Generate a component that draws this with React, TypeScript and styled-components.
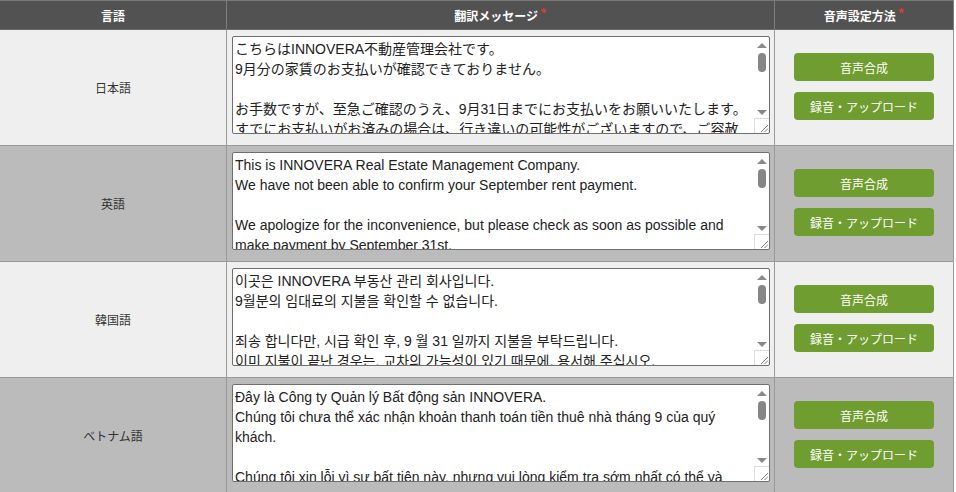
import React from "react";
import styled, { createGlobalStyle } from "styled-components";

const Global = createGlobalStyle`
  html, body { margin: 0; padding: 0; background: #ffffff; }
  body { font-family: "Liberation Sans", "Noto Sans CJK JP", sans-serif; }
`;

const Table = styled.div`
  width: 954px;
  display: grid;
  grid-template-columns: 227px 548px 179px;
`;

const HeadCell = styled.div`
  height: 28px;
  background: #525252;
  border-top: 1px solid #7a7a7a;
  border-bottom: 1px solid #6a6a6a;
  border-right: 1px solid #7c7c7c;
  display: flex;
  align-items: center;
  justify-content: center;
  color: #ffffff;
  font-family: "Noto Sans CJK JP", sans-serif;
  font-weight: 700;
  font-size: 12px;
`;

const Req = styled.span`
  color: #e0383b;
  font-size: 13px;
  margin-left: 2px;
  position: relative;
  top: -3px;
`;

const Cell = styled.div<{ $alt: boolean }>`
  height: 115px;
  background: ${(p) => (p.$alt ? "#bbbbbb" : "#efefef")};
  border-bottom: 1px solid #9a9a9a;
  border-right: 1px solid #9a9a9a;
  box-sizing: content-box;
`;

const LangCell = styled(Cell)`
  display: flex;
  align-items: center;
  justify-content: center;
  color: #333333;
  font-family: "Noto Sans CJK JP", sans-serif;
  font-size: 12px;
`;

const MsgCell = styled(Cell)`
  padding: 6px 0 0 5px;
  height: 109px;
`;

const ActionCell = styled(Cell)`
  display: flex;
  flex-direction: column;
  align-items: center;
  justify-content: center;
  gap: 11px;
  padding-bottom: 2px;
  height: 113px;
`;

const Field = styled.div`
  box-sizing: border-box;
  width: 538px;
  height: 98px;
  border: 1px solid #6f6f6f;
  border-radius: 2px;
  background: #ffffff;
  display: flex;
  overflow: hidden;
`;

const Message = styled.textarea`
  display: block;
  box-sizing: border-box;
  flex: 1;
  min-width: 0;
  height: 100%;
  margin: 0;
  padding: 2px 2px;
  border: none;
  background: transparent;
  color: #222222;
  font-family: "Liberation Sans", "Noto Sans CJK JP", "Noto Sans CJK KR", sans-serif;
  font-size: 14px;
  line-height: 20px;
  resize: none;
  overflow: hidden;
  outline: none;
`;

const Rail = styled.div`
  width: 15px;
  flex: none;
  display: flex;
  flex-direction: column;
  align-items: center;
`;

const Arrow = styled.div<{ $down?: boolean }>`
  width: 0;
  height: 0;
  margin-top: ${(p) => (p.$down ? "auto" : "6px")};
  margin-bottom: ${(p) => (p.$down ? "3px" : "0")};
  border-left: 5px solid transparent;
  border-right: 5px solid transparent;
  ${(p) =>
    p.$down ? "border-top: 5px solid #8a8a8a;" : "border-bottom: 5px solid #8a8a8a;"}
`;

const Thumb = styled.div`
  width: 8px;
  height: 19px;
  margin-top: 5px;
  border-radius: 4px;
  background: #868686;
`;

const Resizer = styled.div`
  box-sizing: border-box;
  width: 15px;
  height: 15px;
  border-left: 1px solid #dcdcdc;
  border-top: 1px solid #dcdcdc;
  display: flex;
  align-items: flex-end;
  justify-content: flex-end;
  padding: 0 1px 1px 0;
`;

const GreenButton = styled.button`
  width: 140px;
  height: 28px;
  border: none;
  border-radius: 4px;
  background: #6f9d2f;
  color: #ffffff;
  font-family: "Noto Sans CJK JP", sans-serif;
  font-size: 12px;
  padding: 0;
  cursor: pointer;
`;

const Grip = () => (
  <svg width="9" height="9" viewBox="0 0 9 9">
    <line x1="2" y1="9" x2="9" y2="2" stroke="#7a7a7a" strokeWidth="1" />
    <line x1="5.5" y1="9" x2="9" y2="5.5" stroke="#7a7a7a" strokeWidth="1" />
  </svg>
);

const rows = [
  {
    lang: "日本語",
    text:
      "こちらはINNOVERA不動産管理会社です。\n9月分の家賃のお支払いが確認できておりません。\n\nお手数ですが、至急ご確認のうえ、9月31日までにお支払いをお願いいたします。\nすでにお支払いがお済みの場合は、行き違いの可能性がございますので、ご容赦ください。\n\nINNOVERA不動産管理会社",
  },
  {
    lang: "英語",
    text:
      "This is INNOVERA Real Estate Management Company.\nWe have not been able to confirm your September rent payment.\n\nWe apologize for the inconvenience, but please check as soon as possible and make payment by September 31st.\nIf you have already paid, please forgive us.\n\nINNOVERA Real Estate Management Company",
  },
  {
    lang: "韓国語",
    text:
      "이곳은 INNOVERA 부동산 관리 회사입니다.\n9월분의 임대료의 지불을 확인할 수 없습니다.\n\n죄송 합니다만, 시급 확인 후, 9 월 31 일까지 지불을 부탁드립니다.\n이미 지불이 끝난 경우는, 교차의 가능성이 있기 때문에, 용서해 주십시오.\n\nINNOVERA 부동산 관리 회사",
  },
  {
    lang: "ベトナム語",
    text:
      "Đây là Công ty Quản lý Bất động sản INNOVERA.\nChúng tôi chưa thể xác nhận khoản thanh toán tiền thuê nhà tháng 9 của quý khách.\n\nChúng tôi xin lỗi vì sự bất tiện này, nhưng vui lòng kiểm tra sớm nhất có thể và thanh toán trước ngày 31 tháng 9.\n\nCông ty Quản lý Bất động sản INNOVERA",
  },
];

export default function App() {
  return (
    <>
      <Global />
      <Table>
        <HeadCell>言語</HeadCell>
        <HeadCell>
          翻訳メッセージ<Req>*</Req>
        </HeadCell>
        <HeadCell>
          音声設定方法<Req>*</Req>
        </HeadCell>
        {rows.map((r, i) => (
          <React.Fragment key={r.lang}>
            <LangCell $alt={i % 2 === 1}>{r.lang}</LangCell>
            <MsgCell $alt={i % 2 === 1}>
              <Field>
                <Message defaultValue={r.text} />
                <Rail>
                  <Arrow />
                  <Thumb />
                  <Arrow $down />
                  <Resizer>
                    <Grip />
                  </Resizer>
                </Rail>
              </Field>
            </MsgCell>
            <ActionCell $alt={i % 2 === 1}>
              <GreenButton>音声合成</GreenButton>
              <GreenButton>録音・アップロード</GreenButton>
            </ActionCell>
          </React.Fragment>
        ))}
      </Table>
    </>
  );
}
